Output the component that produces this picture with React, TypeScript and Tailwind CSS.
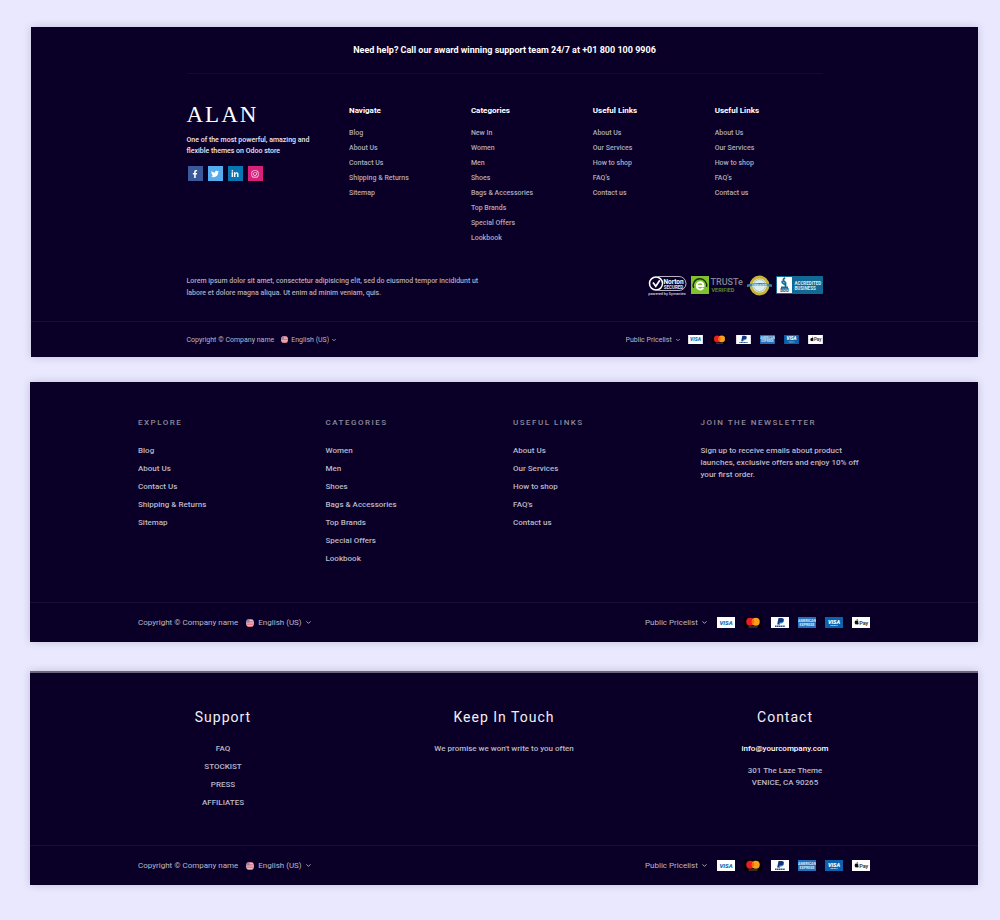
import type { ReactNode } from "react";
import { FaFacebookF, FaTwitter, FaLinkedinIn, FaInstagram } from "react-icons/fa";
import { ChevronDown } from "lucide-react";

const navigate = ["Blog", "About Us", "Contact Us", "Shipping & Returns", "Sitemap"];
const categories = ["Women", "Men", "Shoes", "Bags & Accessories", "Top Brands", "Special Offers", "Lookbook"];
const useful = ["About Us", "Our Services", "How to shop", "FAQ's", "Contact us"];
const support = ["FAQ", "STOCKIST", "PRESS", "AFFILIATES"];

const footerShadow = "shadow-[0_0_8px_rgba(40,40,80,0.2)]";
const wideText = "text-[8px] font-medium text-[#bbb8c6]";

const socials = [
  { name: "Facebook", color: "bg-[#3b5998]", icon: <FaFacebookF /> },
  { name: "Twitter", color: "bg-[#55acee]", icon: <FaTwitter /> },
  { name: "LinkedIn", color: "bg-[#0976b4]", icon: <FaLinkedinIn /> },
  { name: "Instagram", color: "bg-[#d6207a]", icon: <FaInstagram /> },
];

function LinkList({ items, className }: { items: string[]; className: string }) {
  return (
    <ul className={className}>
      {items.map((item) => (
        <li key={item}>
          <a href="#">{item}</a>
        </li>
      ))}
    </ul>
  );
}

function FlagIcon({ className }: { className: string }) {
  return (
    <svg viewBox="0 0 16 16" className={className} aria-hidden="true">
      <clipPath id="flag-round">
        <circle cx="8" cy="8" r="8" />
      </clipPath>
      <g clipPath="url(#flag-round)">
        <rect width="16" height="16" fill="#f3d3da" />
        <path d="M0 1h16M0 4.5h16M0 8h16M0 11.5h16M0 15h16" stroke="#dc5a68" strokeWidth="1.8" />
        <rect width="7" height="7" fill="#8a86b4" />
      </g>
    </svg>
  );
}

function PaymentIcons({ className, gap }: { className: string; gap: string }) {
  return (
    <ul className={`flex items-center ${gap}`}>
      <li>
        <svg viewBox="0 0 36 22" className={className} role="img" aria-label="Visa">
          <rect width="36" height="22" fill="#fff" />
          <text x="18" y="15.5" fontSize="12" fontWeight="900" fontStyle="italic" textAnchor="middle" fill="#1b6fb5">VISA</text>
        </svg>
      </li>
      <li>
        <svg viewBox="0 0 36 22" className={className} role="img" aria-label="Mastercard">
          <rect width="36" height="22" fill="#050008" />
          <circle cx="12.5" cy="9.5" r="8" fill="#eb1c23" />
          <circle cx="23.5" cy="9.5" r="8" fill="#f99f1b" />
          <path d="M18 3.7a8 8 0 0 1 0 11.6a8 8 0 0 1 0-11.6z" fill="#ff6a10" />
          <path d="M9 20h18" stroke="#8d7446" strokeWidth="1.5" />
        </svg>
      </li>
      <li>
        <svg viewBox="0 0 36 22" className={className} role="img" aria-label="PayPal">
          <rect width="36" height="22" fill="#fff" />
          <path d="M15 2h6c4 0 5.500 2.200 4.500 5.500-.8 2.800-2.900 4-6 4h-2l-.9 3.500h-4.200z" fill="#14357c" />
          <path d="M25.500 5c1.500 5-2 8-6 8h-1l-.8 2.500h-2l1-4h2.800c3.300 0 5.300-2 6-6.500z" fill="#2997d8" />
          <path d="M8 18.500h20" stroke="#245795" strokeWidth="2.6" strokeDasharray="3 .7" />
        </svg>
      </li>
      <li>
        <svg viewBox="0 0 36 22" className={className} role="img" aria-label="American Express">
          <rect width="36" height="22" fill="#2671b9" />
          <text x="18" y="10.5" fontSize="7" fontWeight="800" textAnchor="middle" fill="#cfe6fa">AMERICAN</text>
          <text x="18" y="17.5" fontSize="7" fontWeight="800" textAnchor="middle" fill="#cfe6fa">EXPRESS</text>
        </svg>
      </li>
      <li>
        <svg viewBox="0 0 36 22" className={className} role="img" aria-label="Visa Electron">
          <rect width="36" height="22" fill="#0d62ad" />
          <text x="18" y="13" fontSize="11" fontWeight="900" fontStyle="italic" textAnchor="middle" fill="#fff">VISA</text>
          <path d="M11 17h14" stroke="#a9cbea" strokeWidth="2" strokeDasharray="2.5 .7" />
        </svg>
      </li>
      <li>
        <svg viewBox="0 0 36 22" className={className} role="img" aria-label="Apple Pay">
          <rect width="36" height="22" fill="#fff" />
          <path d="M9.500 7.500c1.200-1 3-.6 3.600.4-1.500 1-1.300 3.200.4 4-.7 2.300-2 3.600-3.200 3-.6-.3-1-.3-1.700 0-2 .8-4-3.700-3-6 .7-1.700 2.500-2.200 3.900-1.400zM9.300 6.600c0-1.600 1-2.700 2.300-2.900.1 1.600-.9 2.900-2.300 2.900z" fill="#111" />
          <text x="23.5" y="15" fontSize="11" fontWeight="500" textAnchor="middle" fill="#222">Pay</text>
        </svg>
      </li>
    </ul>
  );
}

function Dropdown({ label, value, compact }: { label: string; value: string; compact: boolean }) {
  return (
    <div className={compact ? "flex items-center gap-0.5" : "flex items-center gap-[3px]"}>
      <select
        aria-label={label}
        className="h-4 cursor-pointer appearance-none bg-transparent leading-[16px]"
        defaultValue={value}
      >
        <option>{value}</option>
      </select>
      <ChevronDown className={compact ? "size-[6px]" : "size-[7px]"} strokeWidth={3} aria-hidden="true" />
    </div>
  );
}

function BottomBar({ compact = false }: { compact?: boolean }) {
  return (
    <div className="border-t border-[#180e34]">
      <div
        className={
          compact
            ? "mx-auto flex h-[35px] max-w-[650px] items-center justify-between px-[7px] text-[7px] leading-[16px] text-[#bbb8c6]"
            : "mx-auto flex h-[39px] max-w-[750px] items-center justify-between px-[9px] text-[8px] leading-[16px] text-[#bbb8c6]"
        }
      >
        <div className={compact ? "flex items-center gap-[7px]" : "flex items-center gap-2"}>
          <span>Copyright © Company name</span>
          <div className={compact ? "flex items-center gap-[3px]" : "flex items-center gap-1"}>
            <FlagIcon className={compact ? "size-[7px]" : "size-2"} />
            <Dropdown label="Language" value="English (US)" compact={compact} />
          </div>
        </div>
        <div className={compact ? "flex items-center gap-[7px]" : "flex items-center gap-[9px]"}>
          <Dropdown label="Pricelist" value="Public Pricelist" compact={compact} />
          <PaymentIcons className={compact ? "h-[9px] w-[15px]" : "h-[11px] w-[18px]"} gap="gap-[9px]" />
        </div>
      </div>
    </div>
  );
}

function TrustBadges() {
  return (
    <div className="flex shrink-0 items-center gap-1">
      <svg viewBox="0 0 40 22" className="h-[22px] w-10" role="img" aria-label="Norton Secured, powered by Symantec">
        <rect x="6" y="2.5" width="33" height="14" rx="7" fill="none" stroke="#c9c5d5" strokeWidth=".9" />
        <circle cx="9" cy="9.5" r="6.5" fill="#0a0027" stroke="#fff" strokeWidth="1.5" />
        <path d="M6 8.500l2.800 3.800 4-6" fill="none" stroke="#fff" strokeWidth="1.7" />
        <text x="26.5" y="9.5" fontSize="6.5" fontWeight="700" textAnchor="middle" fill="#fff">Norton</text>
        <text x="26.5" y="14.5" fontSize="4.5" fontWeight="700" textAnchor="middle" fill="#e5e2ee">SECURED</text>
        <text x="20" y="21" fontSize="3.8" fontWeight="500" textAnchor="middle" fill="#d5d2de">powered by Symantec</text>
      </svg>
      <svg viewBox="0 0 52 18" className="h-[18px] w-[52px]" role="img" aria-label="TRUSTe Verified">
        <rect width="18" height="18" fill="#80c22d" />
        <path d="M2.600 12a6.800 6.800 0 1 1 13-1" fill="none" stroke="#16300a" strokeWidth="1.4" />
        <path d="M5.800 10h6.700c.2-5-6.700-5-6.700-.4 0 4.500 4.500 4.700 6.500 2.300" fill="none" stroke="#fff" strokeWidth="1.9" />
        <text x="19.5" y="9" fontSize="9" fontWeight="500" fill="#85838f">TRUSTe</text>
        <text x="20.5" y="15.5" fontSize="5.5" fontWeight="500" fill="#679a2e">VERIFIED</text>
      </svg>
      <svg viewBox="0 0 25 21" className="h-[21px] w-[25px]" role="img" aria-label="Verified seal">
        <circle cx="12.5" cy="10.5" r="8.5" fill="#dcecf0" stroke="#c8b536" strokeWidth="2.8" />
        <circle cx="12.5" cy="10.5" r="6" fill="none" stroke="#a9c3ca" strokeWidth="1" />
        <path d="M0 9.500q12.500-3 25 0v2.500q-12.500-2.500-25 0z" fill="#3f7f9b" />
        <text x="12.5" y="11.5" fontSize="3.6" fontWeight="700" textAnchor="middle" fill="#d9eff5">VERIFIED</text>
      </svg>
      <svg viewBox="0 0 47 18" className="h-[18px] w-[47px]" role="img" aria-label="BBB Accredited Business">
        <rect width="47" height="18" rx="1" fill="#126a94" />
        <path d="M1 1h15v16H1z" fill="#fff" />
        <path d="M9 1.800c-5 3.200 3 4.200 0 6.700M6.500 5c-2 3 5.500 3 2.500 5.500M5 11.500h7" fill="none" stroke="#146c96" strokeWidth="1.8" />
        <text x="8.5" y="16.3" fontSize="4.5" fontWeight="900" textAnchor="middle" fill="#146c96">BBB</text>
        <text x="18.5" y="8.5" fontSize="4.5" fontWeight="700" fill="#d9edf5">ACCREDITED</text>
        <text x="18.5" y="14" fontSize="4.5" fontWeight="700" fill="#d9edf5">BUSINESS</text>
      </svg>
    </div>
  );
}

function ColumnCompact({ title, items }: { title: string; items: string[] }) {
  return (
    <nav className="col-span-3 px-[7px]" aria-label={title}>
      <h3 className="mb-[9px] text-[8px] leading-[12px] font-bold text-white">{title}</h3>
      <LinkList items={items} className="text-[7px] leading-[15px] font-medium text-[#aeabba]" />
    </nav>
  );
}

function ColumnWide({ title, children }: { title: string; children: ReactNode }) {
  return (
    <section className="px-[9px]">
      <h3 className="mb-[13px] text-[8px] leading-[12px] font-medium tracking-[1.5px] text-[#8d8a99] uppercase">{title}</h3>
      {children}
    </section>
  );
}

function ColumnCentered({ title, children }: { title: string; children: ReactNode }) {
  return (
    <section className="text-center">
      <h3 className="mb-[13px] text-[14px] leading-[20px] tracking-[1px] text-[#f1eff6]">{title}</h3>
      {children}
    </section>
  );
}

export default function App() {
  return (
    <main className="min-h-screen bg-[#eae8fe] pt-[27px] pr-[22px] pb-[34px] pl-[30px] font-['Roboto',sans-serif]">
      <footer className={`ml-px bg-[#0a0027] ${footerShadow}`}>
        <div className="mx-auto max-w-[650px] px-[7px]">
          <p className="border-b border-[#130931] pt-[15px] pb-[15px] text-center text-[9px] leading-[16px] font-bold text-white">
            Need help? Call our award winning support team 24/7 at +01 800 100 9906
          </p>
        </div>
        <div className="mx-auto grid max-w-[650px] grid-cols-16 pt-[31px]">
          <div className="col-span-4 px-[7px]">
            <div className="pb-[10px] font-['Liberation_Serif',serif] text-[23px] leading-[20px] tracking-[2px] text-white">ALAN</div>
            <p className="text-[7px] leading-[11px] font-medium text-[#e9e6f2]">
              One of the most powerful, amazing and
              <br />
              flexible themes on Odoo store
            </p>
            <div className="mt-[9px] flex gap-[5px] pl-px">
              {socials.map((s) => (
                <a
                  key={s.name}
                  href="#"
                  aria-label={s.name}
                  className={`flex size-[15px] items-center justify-center text-[8px] text-white ${s.color}`}
                >
                  {s.icon}
                </a>
              ))}
            </div>
          </div>
          <ColumnCompact title="Navigate" items={navigate} />
          <ColumnCompact title="Categories" items={["New In", ...categories]} />
          <ColumnCompact title="Useful Links" items={useful} />
          <ColumnCompact title="Useful Links" items={useful} />
        </div>
        <div className="mx-auto flex max-w-[650px] items-start justify-between px-[7px] pt-[28px] pb-[22px]">
          <p className="pt-px text-[7px] leading-[12px] font-medium text-[#aeabba]">
            Lorem ipsum dolor sit amet, consectetur adipisicing elit, sed do eiusmod tempor incididunt ut
            <br />
            labore et dolore magna aliqua. Ut enim ad minim veniam, quis.
          </p>
          <TrustBadges />
        </div>
        <BottomBar compact />
      </footer>

      <footer className={`mt-[25px] bg-[#0a0027] ${footerShadow}`}>
        <div className="mx-auto grid max-w-[750px] grid-cols-4 pt-[35px] pb-[34px]">
          <ColumnWide title="Explore">
            <LinkList items={navigate} className={`leading-[18px] ${wideText}`} />
          </ColumnWide>
          <ColumnWide title="Categories">
            <LinkList items={categories} className={`leading-[18px] ${wideText}`} />
          </ColumnWide>
          <ColumnWide title="Useful Links">
            <LinkList items={useful} className={`leading-[18px] ${wideText}`} />
          </ColumnWide>
          <ColumnWide title="Join the newsletter">
            <p className={`pt-[3px] leading-[12px] ${wideText}`}>
              Sign up to receive emails about product launches, exclusive offers and enjoy 10% off your first order.
            </p>
          </ColumnWide>
        </div>
        <BottomBar />
      </footer>

      <footer className={`mt-[29px] border-t-2 border-[#6a667d] bg-[#0a0027] ${footerShadow}`}>
        <div className="mx-auto grid max-w-[843px] grid-cols-3 pt-[34px] pb-[33px]">
          <ColumnCentered title="Support">
            <LinkList items={support} className={`leading-[18px] ${wideText}`} />
          </ColumnCentered>
          <ColumnCentered title="Keep In Touch">
            <p className={`leading-[18px] ${wideText}`}>We promise we won't write to you often</p>
          </ColumnCentered>
          <ColumnCentered title="Contact">
            <a href="mailto:info@yourcompany.com" className="block text-[8px] leading-[18px] font-medium text-white">
              info@yourcompany.com
            </a>
            <address className={`pt-[7px] leading-[12px] not-italic ${wideText}`}>
              301 The Laze Theme
              <br />
              VENICE, CA 90265
            </address>
          </ColumnCentered>
        </div>
        <BottomBar />
      </footer>
    </main>
  );
}
